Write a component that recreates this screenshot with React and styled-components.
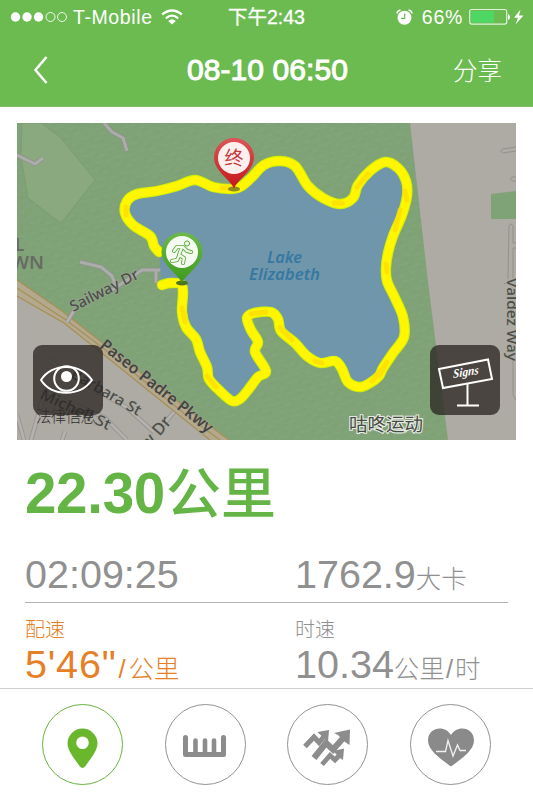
import React from 'react';
import styled, { createGlobalStyle } from 'styled-components';

const GlobalStyle = createGlobalStyle`
  * { box-sizing: border-box; }
  body {
    margin: 0;
    background: #fff;
    font-family: "Liberation Sans", "Noto Sans CJK SC", sans-serif;
  }
  svg { display: block; flex: none; }
`;

const Screen = styled.div`
  width: 533px;
  height: 800px;
  display: flex;
  flex-direction: column;
  overflow: hidden;
  background: #fff;
`;

const Header = styled.header`
  height: 107px;
  flex: none;
  background: #6bbb50;
  border-bottom: 1px solid #7fbf68;
  color: #fff;
`;

const StatusBar = styled.div`
  height: 34px;
  display: grid;
  grid-template-columns: 1fr auto 1fr;
  align-items: center;
  padding: 0 8px 0 10px;
`;

const StatusGroup = styled.div`
  display: flex;
  align-items: center;
  justify-content: ${(p) => (p.$end ? 'flex-end' : 'flex-start')};
`;

const StatusText = styled.span`
  font-size: ${(p) => p.$size || 19}px;
  line-height: 34px;
  letter-spacing: ${(p) => p.$spacing || 0}px;
  margin: ${(p) => p.$margin || 0};
  white-space: nowrap;
  -webkit-text-stroke: ${(p) => p.$stroke || 0}px #fff;
`;

const NavBar = styled.div`
  height: 72px;
  display: grid;
  grid-template-columns: 1fr auto 1fr;
  align-items: center;
  padding: 0 31px 0 33px;
`;

const Title = styled.h1`
  margin: 0;
  font-size: 30px;
  line-height: 72px;
  font-weight: 400;
  letter-spacing: 0.1px;
  -webkit-text-stroke: 1px #fff;
`;

const ShareButton = styled.span`
  justify-self: end;
  padding-top: 4px;
  font-size: 24.5px;
  font-weight: 300;
  line-height: 68px;
`;

const MapCard = styled.section`
  position: relative;
  flex: none;
  width: 499px;
  height: 317px;
  margin: 16px 0 0 17px;
`;

const MapButton = styled.div`
  position: absolute;
  top: 222px;
  ${(p) => (p.$right ? 'right: 16px;' : 'left: 16px;')}
  width: 70px;
  height: 70px;
  border-radius: 9px;
  background: rgba(42, 37, 34, 0.76);
`;

const Stats = styled.main`
  flex: 1;
  padding: 17px 25px 0;
`;

const Distance = styled.div`
  height: 73px;
  display: flex;
  align-items: baseline;
  color: #65b446;
  font-size: 56.5px;
  line-height: 73px;
  font-weight: 700;
  letter-spacing: -0.3px;
`;

const DistanceUnit = styled.span`
  margin-left: 1px;
  font-size: 55px;
  font-weight: 500;
  letter-spacing: 0;
`;

const StatRow = styled.div`
  display: grid;
  grid-template-columns: 270px 1fr;
  height: ${(p) => p.$height}px;
  border-bottom: ${(p) => (p.$line ? '1px solid #b2b2b2' : 'none')};
`;

const Totals = styled(StatRow)`
  margin-top: 19px;
`;

const Stat = styled.div`
  color: ${(p) => (p.$accent ? '#e57f28' : '#909090')};
`;

const Label = styled.div`
  height: 36px;
  padding-top: 10px;
  font-size: 20px;
  font-weight: 300;
  line-height: 34px;
`;

const Value = styled.div`
  display: flex;
  align-items: baseline;
  font-size: 39.5px;
  line-height: 50px;
  letter-spacing: ${(p) => p.$spacing || 0}px;
  white-space: nowrap;
`;

const Unit = styled.span`
  font-size: 25.5px;
  font-weight: 300;
  letter-spacing: 0;
`;

const Slash = styled.span`
  margin: ${(p) => p.$margin};
`;

const TabBar = styled.nav`
  height: 112px;
  flex: none;
  border-top: 1px solid #cfcfcf;
  display: flex;
  justify-content: space-between;
  padding: 15px 42px 0;
`;

const Tab = styled.div`
  width: 81px;
  height: 81px;
  border-radius: 50%;
  border: 1px solid ${(p) => (p.$active ? '#6bb33f' : '#939393')};
  display: flex;
  align-items: center;
  justify-content: center;
`;

const smooth = (pts, closed) => {
  const n = pts.length;
  const at = (i) => (closed ? pts[(i + n) % n] : pts[Math.max(0, Math.min(n - 1, i))]);
  let d = `M${pts[0]}`;
  for (let i = 0; i < (closed ? n : n - 1); i += 1) {
    const [a, b, c, e] = [at(i - 1), at(i), at(i + 1), at(i + 2)];
    d += `C${b[0] + (c[0] - a[0]) / 6},${b[1] + (c[1] - a[1]) / 6} ${c[0] - (e[0] - b[0]) / 6},${c[1] - (e[1] - b[1]) / 6} ${c}`;
  }
  return d;
};

const ROUTE = [
  [162, 285], [170, 283], [181, 284], [183, 293], [182, 312], [186, 327], [196, 339], [200, 352],
  [207, 367], [209, 379], [220, 391], [232, 401], [240, 399], [248, 390], [258, 377], [266, 371],
  [255, 352], [258, 342], [251, 330], [247, 318], [254, 313], [271, 312], [278, 319], [281, 331],
  [295, 343], [307, 356], [320, 363], [335, 361], [342, 369], [348, 382], [360, 387], [370, 383],
  [379, 376], [383, 368], [393, 353], [404, 337], [403, 317], [395, 298], [387, 281], [386, 267],
  [388, 253], [393, 236], [402, 215], [407, 196], [406, 181], [398, 168], [385, 162], [370, 171],
  [358, 185], [353, 198], [340, 204], [323, 198], [308, 186], [295, 166], [280, 161], [264, 165],
  [251, 178], [240, 187], [230, 189], [213, 187], [195, 180], [177, 186], [157, 191], [137, 194],
  [127, 201], [125, 213], [133, 225], [150, 236], [154, 246], [159, 252],
];

const HOT_SPOTS = [
  'M182,308L185,322', 'M207,376L216,387', 'M251,314L266,312', 'M280,328L292,340', 'M315,361L322,363',
  'M386,264L387,272', 'M357,187L368,174', 'M405,191L407,200', 'M372,381L380,371', 'M126,207L126,215',
  'M334,203L342,203', 'M222,188L235,188', 'M400,210L395,230', 'M379,376L387,362',
];

const mapFont = '"Noto Sans", "Open Sans", sans-serif';

function RouteMap() {
  return (
    <svg width="499" height="317" viewBox="17 123 499 317">
      <defs>
        <pattern id="grass" width="23" height="17" patternUnits="userSpaceOnUse" patternTransform="rotate(-15)">
          <path d="M1 3l5-1M9 7l6-1M17 2l5 1M3 12l6 1M14 14l6-1" stroke="#8eae86" strokeWidth="1.2" opacity=".4" />
          <path d="M4 5l5-1M12 10l6-1M18 5l4 0M1 15l5 0" stroke="#75986d" strokeWidth="1.2" opacity=".35" />
        </pattern>
        <linearGradient id="redPin" x1="0" y1="0" x2="0" y2="1">
          <stop offset="0" stopColor="#dd5558" />
          <stop offset="1" stopColor="#c5161b" />
        </linearGradient>
        <linearGradient id="greenPin" x1="0" y1="0" x2="0" y2="1">
          <stop offset="0" stopColor="#6cb84a" />
          <stop offset="1" stopColor="#3f9a1e" />
        </linearGradient>
      </defs>
      <path fill="#80a277" d="M17 123h499v317H17z" />
      <path fill="url(#grass)" d="M17 123h499v317H17z" />
      <path d="M22 123L41 123L60 137L95 180L61 223L28 198L21 157z" fill="#8ba97f" stroke="#789b70" strokeWidth=".8" />
      <path d="M410 123L516 123L516 440L448 440L428 282z" fill="#aeaaa4" />
      <path d="M491 194L516 191V219H491z" fill="#7fa276" />

      <g fill="none" strokeLinejoin="round">
        <g stroke="#8f9190" strokeWidth="4.6">
          <path d="M17 155L35 164L43 158M104 123L112 132L123 138L127 151M80 262L101 267L112 276L117 290" />
          <path d="M112 290L142 270H170M156 270V283" />
        </g>
        <g stroke="#abada9" strokeWidth="3">
          <path d="M17 155L35 164L43 158M104 123L112 132L123 138L127 151M80 262L101 267L112 276L117 290" />
          <path d="M112 290L142 270H170M156 270V283" />
        </g>
      </g>

      <path d="M17 280L100 342L190 411L228 440H17z" fill="#aeaaa4" />
      <path d="M17 280L62 311L100 341L190 411L229 440H210L170 408L103 354L64 323L17 296z" fill="#b3a98f" />
      <path d="M17 280L62 311L100 341L190 411L229 440M17 288L66 320L103 348L190 418L220 440M17 296L64 323L103 354L170 408L210 440" fill="none" stroke="#a88f55" strokeWidth="1.2" />

      <g fill="none" stroke="#939190" strokeWidth="4.5">
        <path d="M48 360L88 386L126 407L154 432M39 388L68 402L105 418L127 440M174 412L163 425M43 398L31 440M65 432L62 440M17 415L24 440M67 322L75 309" />
      </g>
      <g fill="none" stroke="#b5b2ad" strokeWidth="2.8">
        <path d="M48 360L88 386L126 407L154 432M39 388L68 402L105 418L127 440M174 412L163 425M43 398L31 440M65 432L62 440M17 415L24 440M67 322L75 309" />
      </g>
      <g fill="none" stroke="#94918d" strokeWidth="1">
        <path d="M516 147L503 149Q499 151 503 153L516 151M516 177H512Q509 179 512 181H516M508 279L509 226Q511 222 513 226V243H516M513 248V278M516 248H513M504 284L516 279M513 360V395L516 400" />
      </g>

      <path d={smooth(ROUTE, true)} fill="#7096ab" />
      <path d={smooth(ROUTE)} fill="none" stroke="#d4f000" strokeWidth="10.4" strokeLinecap="round" strokeLinejoin="round" />
      <path d={smooth(ROUTE)} fill="none" stroke="#fff600" strokeWidth="8.2" strokeLinecap="round" strokeLinejoin="round" />
      <path d={HOT_SPOTS.join('')} fill="none" stroke="#ffdc00" strokeWidth="5" strokeLinecap="round" opacity=".7" />

      <g fontFamily={mapFont} fill="#3778a2" fontWeight="600" fontStyle="italic" fontSize="15.5">
        <text x="267" y="263" textLength="35" lengthAdjust="spacingAndGlyphs">Lake</text>
        <text x="249" y="280" textLength="71" lengthAdjust="spacingAndGlyphs">Elizabeth</text>
      </g>
      <g fontFamily={mapFont} fill="#666b64" fontWeight="600" fontSize="17">
        <text x="15" y="251">L</text>
        <text x="11" y="269" textLength="33" lengthAdjust="spacingAndGlyphs">WN</text>
      </g>
      <g fontFamily={mapFont} fill="#4b4e49" fontWeight="500" stroke="#aaaaa0" strokeWidth="1.5" paintOrder="stroke" strokeOpacity=".6">
        <text transform="translate(73 312) rotate(-27)" fontSize="15" textLength="75" lengthAdjust="spacingAndGlyphs">Sailway Dr</text>
        <text transform="translate(99 347) rotate(38.5)" fontSize="16" fontWeight="600" fill="#454541" textLength="139" lengthAdjust="spacingAndGlyphs">Paseo Padre Pkwy</text>
        <text transform="translate(70 377) rotate(30)" fontSize="15" textLength="78" lengthAdjust="spacingAndGlyphs">Barbara St</text>
        <text transform="translate(39 398) rotate(25)" fontSize="15" textLength="76" lengthAdjust="spacingAndGlyphs">Michell St</text>
        <text transform="translate(148 450) rotate(-49)" fontSize="16.5">w Dr</text>
        <text transform="translate(507 278) rotate(90)" fontSize="15" textLength="83" lengthAdjust="spacingAndGlyphs">Valdez Way</text>
      </g>
      <text x="349" y="430.500" fontSize="18.500" textLength="74" fontFamily='"Noto Sans CJK SC", sans-serif' fill="#454b42" stroke="#e6eae2" strokeWidth="2.2" paintOrder="stroke">咕咚运动</text>

      <ellipse cx="234" cy="189" rx="6" ry="2.5" fill="#8d8b21" />
      <ellipse cx="182" cy="283" rx="6" ry="2.5" fill="#4f7420" />
      <path d="M234 188.500C231 180 214 171 214 157.500A20 19.500 0 0 1 254 157.500C254 171 237 180 234 188.500z" fill="url(#redPin)" />
      <circle cx="234" cy="158" r="16" fill="#fcefee" />
      <text x="234" y="165" fontSize="19" textAnchor="middle" fontFamily='"Noto Sans CJK SC", sans-serif' fill="#c8383c">终</text>
      <path d="M182 283C179 275 161.500 265 161.500 252A20.500 19.500 0 0 1 202.500 252C202.500 265 185 275 182 283z" fill="url(#greenPin)" />
      <circle cx="182" cy="252" r="16" fill="#f4faef" />
      <g fill="none" strokeLinecap="round" strokeLinejoin="round">
        <path d="M174 251L177 247L183 247L187 251L191 252M182 247L179 255L184 258L183 263M179 256L177 260L172 261" stroke="#5eaa3a" strokeWidth="4" />
        <path d="M174 251L177 247L183 247L187 251L191 252M182 247L179 255L184 258L183 263M179 256L177 260L172 261" stroke="#f4faef" strokeWidth="2.300" />
        <circle cx="187" cy="243.500" r="2.600" stroke="#5eaa3a" strokeWidth="1" fill="#f4faef" />
      </g>
    </svg>
  );
}

function LegalNotice() {
  return (
    <svg width="62" height="22" viewBox="0 0 62 22">
      <text x="1" y="16" fontSize="15.500" textLength="60" fontFamily='"Noto Sans CJK SC", sans-serif' fontWeight="300" fill="#2f2d2c">法律信息</text>
    </svg>
  );
}

const LegalSlot = styled.div`
  position: absolute;
  left: 18px;
  top: 283px;
`;

const EyeIcon = () => (
  <svg width="70" height="70" viewBox="0 0 70 70" fill="none" stroke="#fff" strokeWidth="2">
    <path d="M8 35C19 17.500 47 17.500 59 35C47 52 19 52 8 35z" strokeLinejoin="round" />
    <circle cx="33.500" cy="33.500" r="12.300" />
    <circle cx="33.500" cy="31.500" r="5.500" fill="#fff" stroke="none" />
  </svg>
);

const SignIcon = () => (
  <svg width="70" height="70" viewBox="0 0 70 70" fill="none" stroke="#fff" strokeWidth="2">
    <path d="M9 24L58 14.500L62 34L13 43z" />
    <path d="M37.500 38.500V60.500M27 60.500H49" />
    <text transform="translate(23 33) rotate(-9) skewX(-10)" fontFamily='"Liberation Serif", serif' fontWeight="700" fontStyle="italic" fontSize="12.500" textLength="26" lengthAdjust="spacingAndGlyphs" fill="#fff" stroke="none">Signs</text>
  </svg>
);

const SignalIcon = () => (
  <svg width="58" height="12" viewBox="0 0 58 12" fill="#fff">
    <circle cx="5.500" cy="6" r="4.700" />
    <circle cx="17" cy="6" r="4.700" />
    <circle cx="28.500" cy="6" r="4.700" />
    <circle cx="40.500" cy="6" r="4.500" fill="none" stroke="#fff" strokeWidth=".9" />
    <circle cx="52" cy="6" r="4.500" fill="none" stroke="#fff" strokeWidth=".9" />
  </svg>
);

const WifiIcon = () => (
  <svg width="22" height="16" viewBox="0 0 22 16" fill="none" stroke="#fff" strokeWidth="2.300">
    <path d="M1.200 5.500Q11 -2.600 20.800 5.500M4.800 9.300Q11 4 17.200 9.300" />
    <path d="M7.200 12Q11 8.700 14.800 12L11 15.500z" fill="#fff" stroke="none" />
  </svg>
);

const AlarmIcon = () => (
  <svg width="17" height="17" viewBox="0 0 17 17">
    <circle cx="8.500" cy="8.800" r="7" fill="#fff" />
    <path d="M8.700 4.500V9.300H5" stroke="#6bbb50" strokeWidth="1.200" fill="none" />
    <path d="M.8 4.500Q1.500 1.500 4.500 1M16.200 4.500Q15.500 1.500 12.500 1" stroke="#fff" strokeWidth="1.300" fill="none" />
  </svg>
);

const BatteryIcon = () => (
  <svg width="56" height="18" viewBox="0 0 56 18">
    <rect x=".7" y="1.500" width="37" height="14.600" rx="2" fill="none" stroke="#e1f2da" strokeWidth="1.200" />
    <rect x="2.200" y="3" width="22.800" height="11.600" fill="#4fd766" />
    <path d="M39 6Q41 6.500 41 9T39 12z" fill="#fff" />
    <path d="M51.500 1.500L45 9.800H49L46.500 16.500L54.500 7.500H50z" fill="#fff" />
  </svg>
);

const BackIcon = () => (
  <svg width="16" height="30" viewBox="0 0 16 30" fill="none" stroke="#fff" strokeWidth="2.500">
    <path d="M13.500 2L2.500 15L13.500 28" />
  </svg>
);

const PinIcon = () => (
  <svg width="79" height="79" viewBox="0 0 79 79">
    <path fillRule="evenodd" fill="#6ab62d" d="M39.500 23.500A15 15 0 0 1 54.500 38.500C54.500 46 46.500 55 42.500 61Q39.500 65 36.500 61C32.500 55 24.500 46 24.500 38.500A15 15 0 0 1 39.500 23.500zM39.500 31.500A6.300 6.300 0 1 0 39.500 44.100A6.300 6.300 0 1 0 39.500 31.500z" />
  </svg>
);

const RulerIcon = () => (
  <svg width="79" height="79" viewBox="0 0 79 79" fill="none" stroke="#8c8c8c" strokeLinecap="round" strokeLinejoin="round">
    <path d="M19.500 32.500V49.500H57.500V32.500" strokeWidth="5" />
    <path d="M29.500 35.500V49M39 35.500V49M48 35.500V49" strokeWidth="4.600" />
  </svg>
);

const TrendIcon = () => (
  <svg width="79" height="79" viewBox="0 0 79 79" fill="none" stroke="#8c8c8c">
    <path d="M17 41.500L26 32L31 37.500L38 29" strokeWidth="5" />
    <path d="M29.500 27L41 25L40 37L37 34L32 29.500z" fill="#8c8c8c" stroke="none" />
    <path d="M26 53L38 38L45 44.500L57 31" strokeWidth="6.200" />
    <path d="M46 28L62 24.500L61.500 40L57 37L50 30z" fill="#8c8c8c" stroke="none" />
    <path d="M34 59.500L42 50.500L47 55L53 48.500" strokeWidth="4.800" />
    <path d="M45 46L56 43.500L55 55L52 53z" fill="#8c8c8c" stroke="none" />
  </svg>
);

const HeartIcon = () => (
  <svg width="79" height="79" viewBox="0 0 79 79">
    <path fill="#8a8a8a" d="M40 61.500C33 56 17 46.500 17 35.500C17 22 34 19.500 40 30C46 19.500 63 22 63 35.500C63 46.500 47 56 40 61.500z" />
    <path d="M25 46.500H34.500L37 35.500L42 51L46.500 40L49 45.500H55" fill="none" stroke="#f2f2f2" strokeWidth="1.300" />
  </svg>
);

export default function App() {
  return (
    <Screen>
      <GlobalStyle />
      <Header>
        <StatusBar>
          <StatusGroup>
            <SignalIcon />
            <StatusText $size={19.5} $spacing={0.6} $margin="0 8px 0 5px">T-Mobile</StatusText>
            <WifiIcon />
          </StatusGroup>
          <StatusText $size={19.5} $stroke={0.3} $margin="0 2px 0 0">下午2:43</StatusText>
          <StatusGroup $end>
            <AlarmIcon />
            <StatusText $size={19.5} $spacing={0.7} $margin="0 6px 0 9px">66%</StatusText>
            <BatteryIcon />
          </StatusGroup>
        </StatusBar>
        <NavBar>
          <BackIcon />
          <Title>08-10 06:50</Title>
          <ShareButton>分享</ShareButton>
        </NavBar>
      </Header>

      <MapCard>
        <RouteMap />
        <MapButton><EyeIcon /></MapButton>
        <MapButton $right><SignIcon /></MapButton>
        <LegalSlot><LegalNotice /></LegalSlot>
      </MapCard>

      <Stats>
        <Distance>22.30<DistanceUnit>公里</DistanceUnit></Distance>
        <Totals $height={54} $line>
          <Stat><Value>02:09:25</Value></Stat>
          <Stat><Value>1762.9<Unit>大卡</Unit></Value></Stat>
        </Totals>
        <StatRow $height={85}>
          <Stat $accent>
            <Label>配速</Label>
            <Value $spacing={0.8}>5'46"<Unit><Slash $margin="0 3px 0 2px">/</Slash>公里</Unit></Value>
          </Stat>
          <Stat>
            <Label>时速</Label>
            <Value>10.34<Unit>公里<Slash $margin="0 2px 0 1px">/</Slash>时</Unit></Value>
          </Stat>
        </StatRow>
      </Stats>

      <TabBar>
        <Tab $active><PinIcon /></Tab>
        <Tab><RulerIcon /></Tab>
        <Tab><TrendIcon /></Tab>
        <Tab><HeartIcon /></Tab>
      </TabBar>
    </Screen>
  );
}
